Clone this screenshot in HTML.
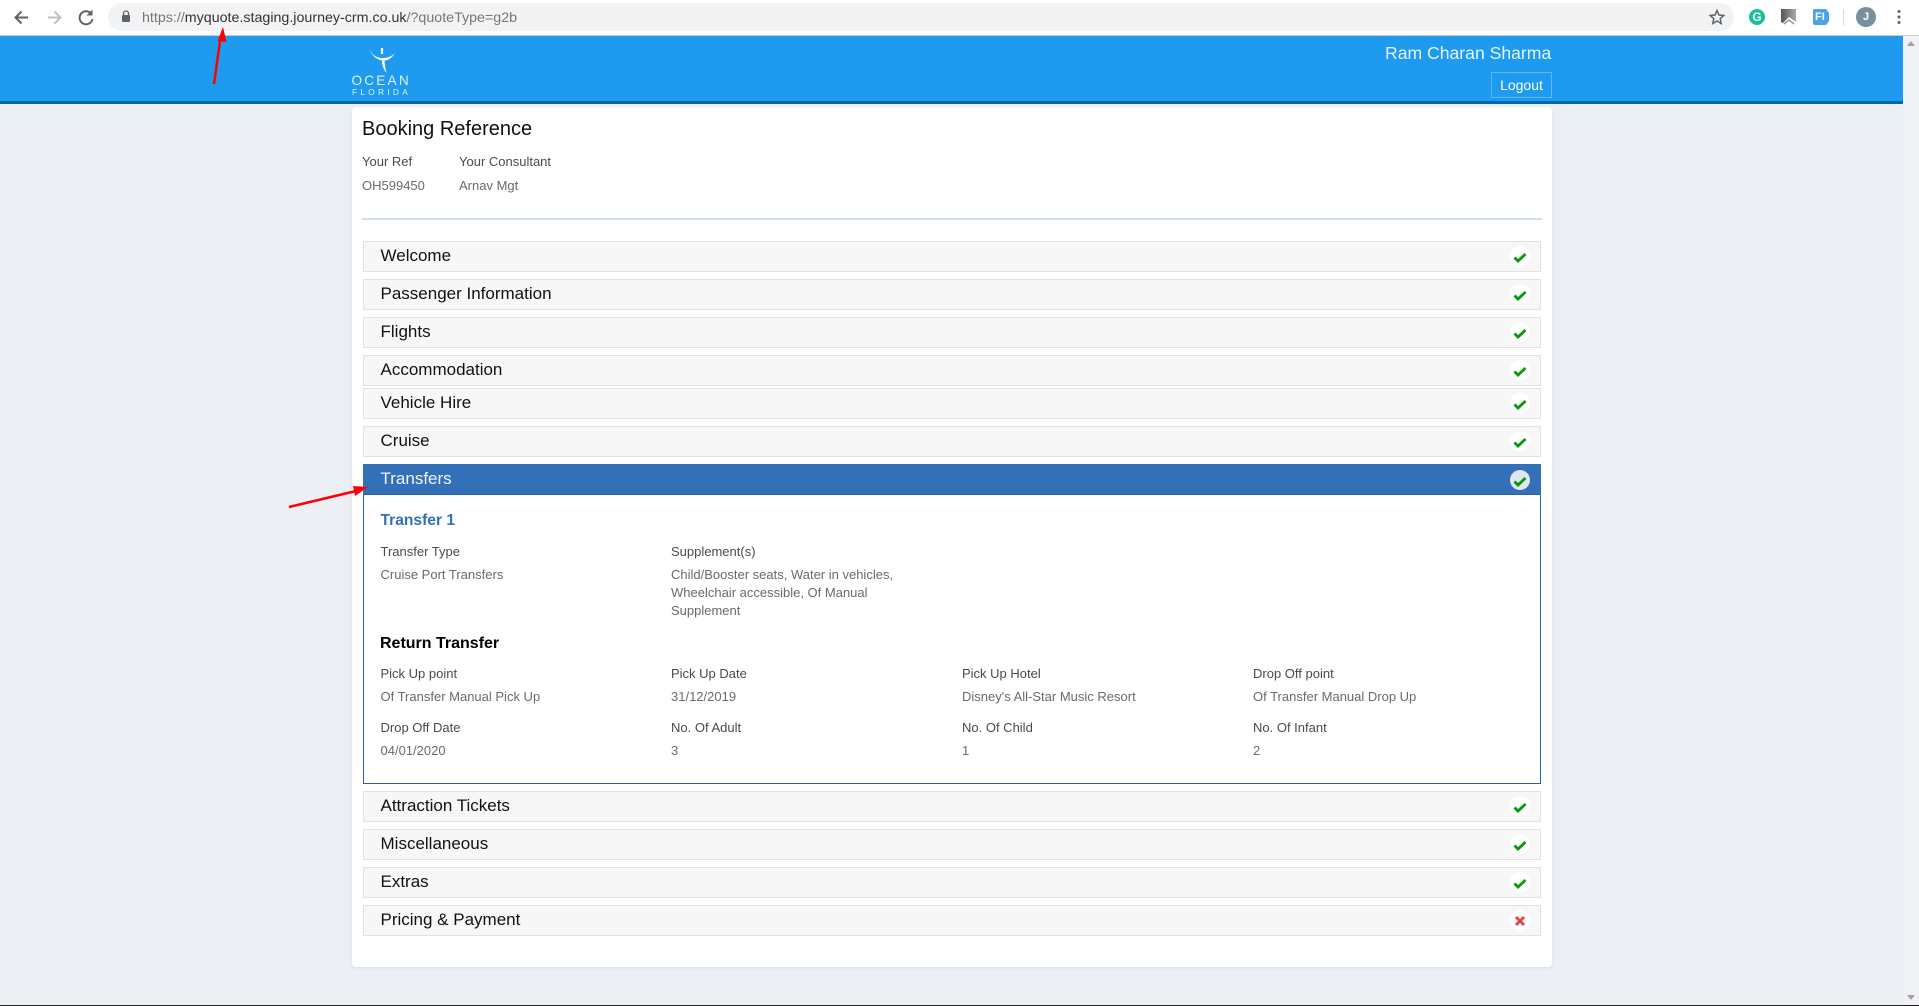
<!DOCTYPE html>
<html lang="en"><head><meta charset="utf-8"><title>Booking Reference</title>
<style>
html,body{margin:0;padding:0;width:1919px;height:1006px;overflow:hidden;background:#eceff4;font-family:"Liberation Sans",Arial,sans-serif}
.a{position:absolute}
.t{position:absolute;white-space:nowrap;line-height:20px;height:20px}
.l{font-size:13px;color:#4a4a4a}
.v{font-size:13px;color:#6a6a6a}
.r{position:absolute;left:363px;width:1176px;height:29px;border:1px solid #e2e2e2;background:#f7f7f7}
.h{position:absolute;left:380.500px;font-size:17px;line-height:20px;white-space:nowrap;color:#111}
.c{position:absolute;left:1510px;width:20px;height:20px;border-radius:50%;background:#fff}
.c svg{position:absolute;left:3px;top:3.500px}
</style></head><body>
<div class="a" style="left:0;top:0;width:1919px;height:35px;background:#fff"></div>
<div class="a" style="left:0;top:35px;width:1919px;height:1px;background:#c9c9c9"></div>
<div class="a" style="left:108px;top:3px;width:1626px;height:28px;border-radius:14px;background:#f1f3f4"></div>
<svg class="a" style="left:0;top:0" width="140" height="35" viewBox="0 0 140 35" fill="none">
<path d="M28 17.500H16M21.500 11.500l-6 6 6 6" stroke="#5f6368" stroke-width="2"/>
<path d="M48 17.500h12M54.500 11.500l6 6-6 6" stroke="#bdc1c6" stroke-width="2"/>
<path d="M91 13.500a6.500 6.500 0 1 0 1.500 5.500" stroke="#5f6368" stroke-width="2"/><path d="M92.500 9.500v6h-6z" fill="#5f6368"/>
<rect x="122" y="15" width="8" height="7" rx="1" fill="#5f6368"/><path d="M123.500 15.500v-2a2.500 2.500 0 0 1 5 0v2" stroke="#5f6368" stroke-width="1.300"/>
</svg>
<div class="t" style="left:142px;top:8px;font-size:14.250px;color:#777">https://<span style="color:#333">myquote.staging.journey-crm.co.uk</span>/?quoteType=g2b</div>
<svg class="a" style="left:1708px;top:8px" width="18" height="18" viewBox="0 0 18 18" fill="none"><path d="M9 2.500l2 4.500 4.800.5-3.600 3.200 1 4.800L9 13l-4.200 2.500 1-4.800L2.200 7.500 7 7z" stroke="#5f6368" stroke-width="1.500"/></svg>
<div class="a" style="left:1749px;top:9px;width:16px;height:16px;border-radius:50%;background:#15c39a;color:#fff;font-size:12px;font-weight:bold;line-height:16px;text-align:center">G</div>
<svg class="a" style="left:1781px;top:9px" width="16" height="16" viewBox="0 0 16 16"><defs><linearGradient id="g" x1="0" y1="0" x2="1" y2="0"><stop offset="0" stop-color="#555"/><stop offset="1" stop-color="#aaa"/></linearGradient></defs><path d="M0 0h15v13l-7-5-6 6-2-1z" fill="url(#g)"/><path d="M3 15l5-4 5 4" stroke="#999" stroke-width="1.500" fill="none"/></svg>
<svg class="a" style="left:1813px;top:9px" width="17" height="16" viewBox="0 0 17 16"><path d="M2 0h11l3 4v8l-3 4H2a2 2 0 0 1-2-2V2a2 2 0 0 1 2-2z" fill="#4ba3e3"/></svg>
<div class="t" style="left:1815px;top:7px;font-size:11px;font-weight:bold;color:#fff">FI</div>
<div class="a" style="left:1843px;top:9px;width:1px;height:16px;background:#d5d5d5"></div>
<div class="a" style="left:1856px;top:7px;width:20px;height:20px;border-radius:50%;background:#78909c;color:#fff;font-size:11px;font-weight:bold;line-height:20px;text-align:center">J</div>
<svg class="a" style="left:1896px;top:9px" width="6" height="16"><circle cx="3" cy="2.500" r="1.500" fill="#5f6368"/><circle cx="3" cy="8" r="1.500" fill="#5f6368"/><circle cx="3" cy="13.500" r="1.500" fill="#5f6368"/></svg>

<div class="a" style="left:0;top:36px;width:1903px;height:65px;background:#1e9aee"></div>
<div class="a" style="left:0;top:101px;width:1903px;height:3px;background:#0069ae"></div>
<div class="a" style="left:1903px;top:36px;width:16px;height:969px;background:#f1f2f5"></div>
<svg class="a" style="left:1903px;top:36px" width="16" height="969"><path d="M8 5l4 5H4z" fill="#a3a3a3"/><path d="M8 964l4-5H4z" fill="#a3a3a3"/></svg>
<div class="a" style="left:0;top:1005px;width:1919px;height:1px;background:#222"></div>

<svg class="a" style="left:360px;top:44px" width="44" height="32" viewBox="360 44 44 32" fill="none"><path d="M369 48c2 6 7 9.500 12 10c5.500.3 11-1.500 14-5c-3 5-7 7.500-10.500 7.500c.2 4.500 1 8.500 2 12.500c-3-3.500-4.500-8-4.500-12.500c-6-1-11-6-13-12.500z" fill="#fff"/><path d="M382 48v6" stroke="#fff" stroke-width="2.200"/></svg>
<div class="t" style="left:351.500px;top:71px;font-size:13.600px;letter-spacing:2.200px;color:#dff0fc">OCEAN</div>
<div class="t" style="left:352px;top:82px;font-size:8.300px;letter-spacing:3.300px;color:#e6f3fd">FLORIDA</div>
<div class="t" style="left:1385px;top:43px;font-size:17.600px;color:#e6f3fd">Ram Charan Sharma</div>
<div class="a" style="left:1491px;top:72px;width:59px;height:24px;border:1px solid #5db7f3;color:#fff;font-size:14px;line-height:25px;text-align:center">Logout</div>

<div class="a" style="left:352px;top:107px;width:1200px;height:860px;background:#fff;border-radius:4px;box-shadow:0 1px 3px rgba(0,0,0,.08)"></div>
<div class="t" style="left:362px;top:119px;font-size:20px;color:#111">Booking Reference</div>
<div class="t l" style="left:362px;top:152px">Your Ref</div>
<div class="t l" style="left:459px;top:152px">Your Consultant</div>
<div class="t v" style="left:362px;top:176px">OH599450</div>
<div class="t v" style="left:459px;top:176px">Arnav Mgt</div>
<div class="a" style="left:362px;top:218px;width:1180px;height:2px;background:#cfe0f8"></div>

<div class="r" style="top:241px"></div><div class="h" style="top:246px">Welcome</div>
<div class="r" style="top:279px"></div><div class="h" style="top:284px">Passenger Information</div>
<div class="r" style="top:317px"></div><div class="h" style="top:322px">Flights</div>
<div class="r" style="top:355px"></div><div class="h" style="top:360px">Accommodation</div>
<div class="r" style="top:388px"></div><div class="h" style="top:393px">Vehicle Hire</div>
<div class="r" style="top:426px"></div><div class="h" style="top:431px">Cruise</div>
<div class="a" style="left:363px;top:464px;width:1176px;height:318px;border:1.500px solid #2a62a5;background:#fff"></div>
<div class="a" style="left:363px;top:464px;width:1178px;height:31px;background:#3470b7;border-bottom:1px solid #2a62a5;box-sizing:border-box"></div>
<div class="h" style="top:469px;color:#f2f6fb">Transfers</div>
<div class="t" style="left:380.500px;top:511px;font-size:15.600px;font-weight:bold;color:#3470b7">Transfer 1</div>
<div class="t l" style="left:380.500px;top:542px">Transfer Type</div>
<div class="t l" style="left:671px;top:542px">Supplement(s)</div>
<div class="t v" style="left:380.500px;top:565px">Cruise Port Transfers</div>
<div class="t v" style="left:671px;top:565px">Child/Booster seats, Water in vehicles,</div>
<div class="t v" style="left:671px;top:583px">Wheelchair accessible, Of Manual</div>
<div class="t v" style="left:671px;top:601px">Supplement</div>
<div class="t" style="left:380px;top:634px;font-size:16px;font-weight:bold;color:#000">Return Transfer</div>
<div class="t l" style="left:380.500px;top:664px">Pick Up point</div>
<div class="t l" style="left:671px;top:664px">Pick Up Date</div>
<div class="t l" style="left:962px;top:664px">Pick Up Hotel</div>
<div class="t l" style="left:1253px;top:664px">Drop Off point</div>
<div class="t v" style="left:380.500px;top:687px">Of Transfer Manual Pick Up</div>
<div class="t v" style="left:671px;top:687px">31/12/2019</div>
<div class="t v" style="left:962px;top:687px">Disney's All-Star Music Resort</div>
<div class="t v" style="left:1253px;top:687px">Of Transfer Manual Drop Up</div>
<div class="t l" style="left:380.500px;top:718px">Drop Off Date</div>
<div class="t l" style="left:671px;top:718px">No. Of Adult</div>
<div class="t l" style="left:962px;top:718px">No. Of Child</div>
<div class="t l" style="left:1253px;top:718px">No. Of Infant</div>
<div class="t v" style="left:380.500px;top:741px">04/01/2020</div>
<div class="t v" style="left:671px;top:741px">3</div>
<div class="t v" style="left:962px;top:741px">1</div>
<div class="t v" style="left:1253px;top:741px">2</div>
<div class="r" style="top:791px"></div><div class="h" style="top:796px">Attraction Tickets</div>
<div class="r" style="top:829px"></div><div class="h" style="top:834px">Miscellaneous</div>
<div class="r" style="top:867px"></div><div class="h" style="top:872px">Extras</div>
<div class="r" style="top:905px"></div><div class="h" style="top:910px">Pricing &amp; Payment</div>

<div class="c" style="top:246px"><svg width="14" height="14"><path d="M1.500 7.500l3.500 3.500 7.500-7" fill="none" stroke="#0a960a" stroke-width="2.800"/></svg></div>
<div class="c" style="top:284px"><svg width="14" height="14"><path d="M1.500 7.500l3.500 3.500 7.500-7" fill="none" stroke="#0a960a" stroke-width="2.800"/></svg></div>
<div class="c" style="top:322px"><svg width="14" height="14"><path d="M1.500 7.500l3.500 3.500 7.500-7" fill="none" stroke="#0a960a" stroke-width="2.800"/></svg></div>
<div class="c" style="top:360px"><svg width="14" height="14"><path d="M1.500 7.500l3.500 3.500 7.500-7" fill="none" stroke="#0a960a" stroke-width="2.800"/></svg></div>
<div class="c" style="top:393px"><svg width="14" height="14"><path d="M1.500 7.500l3.500 3.500 7.500-7" fill="none" stroke="#0a960a" stroke-width="2.800"/></svg></div>
<div class="c" style="top:431px"><svg width="14" height="14"><path d="M1.500 7.500l3.500 3.500 7.500-7" fill="none" stroke="#0a960a" stroke-width="2.800"/></svg></div>
<div class="c" style="top:470px;background:#dfe7f1"><svg width="14" height="14"><path d="M1.500 7.500l3.500 3.500 7.500-7" fill="none" stroke="#0a960a" stroke-width="2.800"/></svg></div>
<div class="c" style="top:796px"><svg width="14" height="14"><path d="M1.500 7.500l3.500 3.500 7.500-7" fill="none" stroke="#0a960a" stroke-width="2.800"/></svg></div>
<div class="c" style="top:834px"><svg width="14" height="14"><path d="M1.500 7.500l3.500 3.500 7.500-7" fill="none" stroke="#0a960a" stroke-width="2.800"/></svg></div>
<div class="c" style="top:872px"><svg width="14" height="14"><path d="M1.500 7.500l3.500 3.500 7.500-7" fill="none" stroke="#0a960a" stroke-width="2.800"/></svg></div>
<div class="c" style="top:910px"><svg width="14" height="14"><path d="M3 3l8 8M11 3l-8 8" fill="none" stroke="#dc4a4a" stroke-width="3"/></svg></div>

<svg class="a" style="left:0;top:0;pointer-events:none" width="1919" height="1006"><path d="M214 84L220 41" stroke="#f00" stroke-width="2.500" fill="none"/><path d="M223 27l3.500 15-9-1z" fill="#f00"/><path d="M289 507L356 491" stroke="#f00" stroke-width="2.500" fill="none"/><path d="M368 487l-13 9-2-10z" fill="#f00"/></svg>
</body></html>
